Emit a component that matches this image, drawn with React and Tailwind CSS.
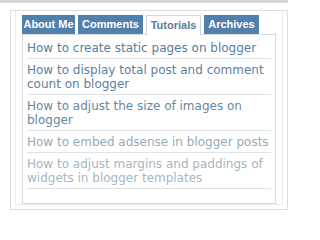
const tabs = [
  { label: 'About Me', width: 'w-[53px]', active: false },
  { label: 'Comments', width: 'w-[65px]', active: false },
  { label: 'Tutorials', width: 'w-[55px]', active: true },
  { label: 'Archives', width: 'w-[55px]', active: false },
]

const posts = [
  { text: 'How to create static pages on blogger', color: 'text-[#55809f]' },
  { text: 'How to display total post and comment count on blogger', color: 'text-[#5b819f]' },
  { text: 'How to adjust the size of images on blogger', color: 'text-[#6688a2]' },
  { text: 'How to embed adsense in blogger posts', color: 'text-[#97aab8]' },
  { text: 'How to adjust margins and paddings of widgets in blogger templates', color: 'text-[#a6b6c2]' },
]

export default function App() {
  return (
    <div className="w-[300px] h-[218px] bg-white overflow-hidden">
      <div className="h-[3px] w-[288px] bg-[#d6d6d6]" />
      <div className="ml-[10px] mt-[7px] w-[278px] h-[200px] border border-[#dedede] pl-[4px] pr-[4px] pb-[4px]">
        <div className="h-full border-r border-b border-l border-[#ececec] pt-[3px] pl-[6px] pr-[7px]">
          {/* Tabs */}
          <div className="flex gap-[3px] h-[20px] items-end whitespace-nowrap" style={{ fontFamily: '"Liberation Sans", Arial, sans-serif' }}>
            {tabs.map(t => (
              <div
                key={t.label}
                className={
                  t.active
                    ? `${t.width} h-[20px] flex items-center justify-center bg-white border border-b-0 border-[#cfd6dc] text-[#5a7c98] text-[11px] font-bold -mb-px relative z-10`
                    : `${t.width} h-[19px] flex items-center justify-center bg-[#5080ab] text-white text-[11px] font-bold`
                }
              >
                {t.label}
              </div>
            ))}
          </div>
          {/* Panel */}
          <div className="w-[254px] h-[170px] border border-[#d5dbe0] px-[4px] pt-[2px]">
            {posts.map(p => (
              <div
                key={p.text}
                className={`border-b border-[#dfe3e6] pt-[4px] pb-[3px] text-[12px] leading-[14px] ${p.color}`}
                style={{ fontFamily: '"DejaVu Sans", Verdana, sans-serif' }}
              >
                {p.text}
              </div>
            ))}
          </div>
        </div>
      </div>
    </div>
  )
}
